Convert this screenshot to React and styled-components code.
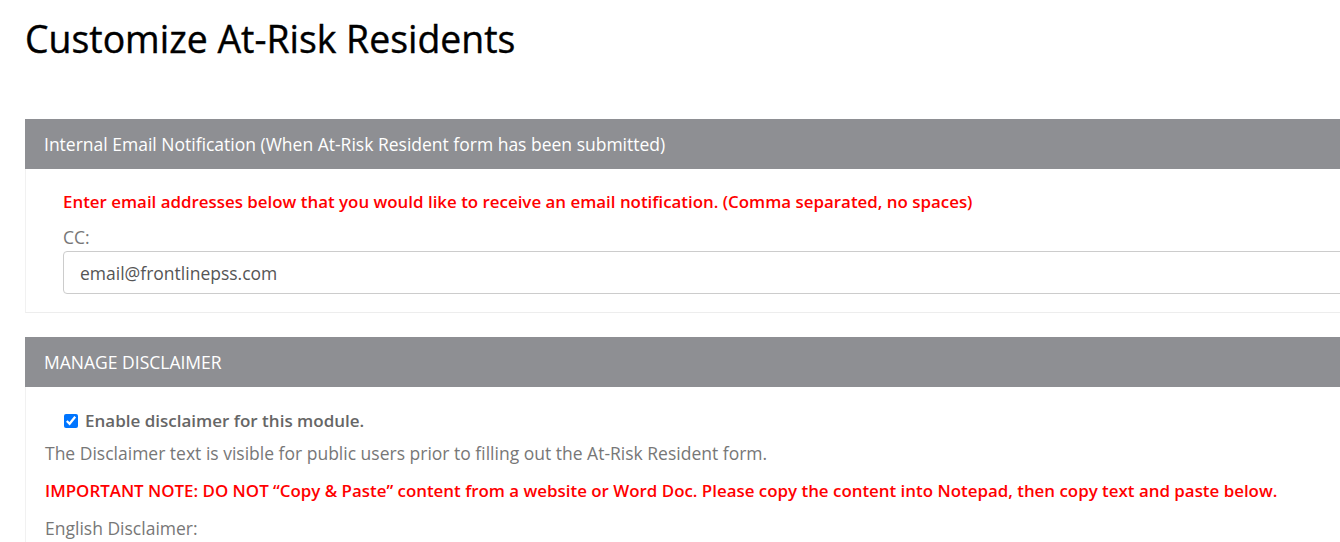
import styled, { createGlobalStyle } from "styled-components";

const GlobalStyle = createGlobalStyle`
  html, body {
    margin: 0;
    padding: 0;
    background: #fff;
    overflow: hidden;
  }
  body {
    font-family: "Open Sans", "Liberation Sans", sans-serif;
  }
`;

const Page = styled.div`
  width: 1400px;
  padding: 17px 0 0 25px;
`;

const Title = styled.h1`
  margin: 0 0 59px;
  font-size: 37.4px;
  line-height: 43px;
  font-weight: 400;
  color: #000;
  -webkit-text-stroke: 0.4px #000;
`;

const Panel = styled.section`
  margin-bottom: 24px;
`;

const PanelHeader = styled.div`
  height: 50px;
  display: flex;
  align-items: center;
  padding: 0 19px;
  background: #8e8f93;
  color: #fff;
  font-size: 17.5px;
`;

const PanelBody = styled.div`
  padding: ${(p) => p.$pad || "20px 0 18px 19px"};
  border-left: 1px solid #f1f1f1;
  border-bottom: 1px solid #ededed;
`;

const Group = styled.div`
  padding-left: ${(p) => p.$indent || 0}px;
`;

const Note = styled.p`
  margin: ${(p) => p.$margin || "0"};
  color: #ff0000;
  font-size: 16.9px;
  line-height: 24px;
  font-weight: 600;
`;

const Label = styled.label`
  display: block;
  margin: ${(p) => p.$margin || "0"};
  color: #777;
  font-size: 17.5px;
  line-height: 24px;
`;

const TextInput = styled.input`
  display: block;
  box-sizing: border-box;
  width: 100%;
  height: 43px;
  margin-top: 2px;
  padding: 0 16px;
  border: 1px solid #ccc;
  border-radius: 4px;
  font-family: inherit;
  font-size: 17.5px;
  color: #555;
  background: #fff;
  outline: none;
`;

const CheckRow = styled.label`
  display: flex;
  align-items: center;
  gap: 7px;
  padding-left: 19px;
  color: #666;
  font-size: 17px;
  line-height: 24px;
  font-weight: 600;

  input {
    width: 14px;
    height: 14px;
    margin: 0;
    accent-color: #0075ff;
  }
`;

const Text = styled.p`
  margin: ${(p) => p.$margin || "0"};
  color: #777;
  font-size: 17.5px;
  line-height: 24px;
`;

export default function App() {
  return (
    <>
      <GlobalStyle />
      <Page>
        <Title>Customize At-Risk Residents</Title>

        <Panel>
          <PanelHeader>
            Internal Email Notification (When At-Risk Resident form has been
            submitted)
          </PanelHeader>
          <PanelBody $pad="21px 0 18px 19px">
            <Group $indent={18}>
              <Note>
                Enter email addresses below that you would like to receive an
                email notification. (Comma separated, no spaces)
              </Note>
              <Label $margin="11px 0 0">CC:</Label>
              <TextInput defaultValue="email@frontlinepss.com" />
            </Group>
          </PanelBody>
        </Panel>

        <Panel>
          <PanelHeader>MANAGE DISCLAIMER</PanelHeader>
          <PanelBody $pad="22px 0 18px 19px">
            <CheckRow>
              <input type="checkbox" defaultChecked />
              Enable disclaimer for this module.
            </CheckRow>
            <Text $margin="8px 0 0">
              The Disclaimer text is visible for public users prior to filling
              out the At-Risk Resident form.
            </Text>
            <Note $margin="14px 0 0">
              IMPORTANT NOTE: DO NOT “Copy &amp; Paste” content from a website or
              Word Doc. Please copy the content into Notepad, then copy text and
              paste below.
            </Note>
            <Label $margin="13px 0 0">English Disclaimer:</Label>
          </PanelBody>
        </Panel>
      </Page>
    </>
  );
}
